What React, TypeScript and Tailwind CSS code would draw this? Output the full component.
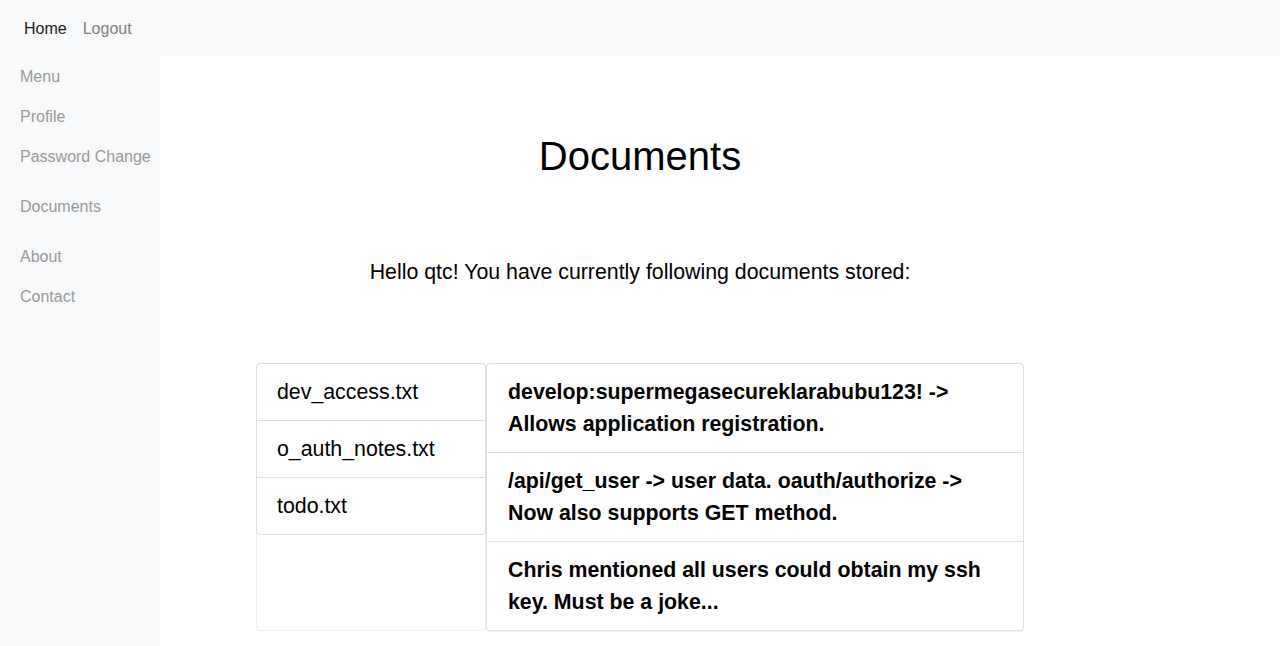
import React from 'react';

const sideLinks = [
  { label: 'Menu', gap: false },
  { label: 'Profile', gap: false },
  { label: 'Password Change', gap: false },
  { label: 'Documents', gap: true },
  { label: 'About', gap: true },
  { label: 'Contact', gap: false },
];

const files = ['dev_access.txt', 'o_auth_notes.txt', 'todo.txt'];

const notes = [
  'develop:supermegasecureklarabubu123! -> Allows application registration.',
  '/api/get_user -> user data. oauth/authorize -> Now also supports GET method.',
  'Chris mentioned all users could obtain my ssh key. Must be a joke...',
];

const App: React.FC = () => {
  return (
    <div className="min-h-[646px] bg-white text-black font-['Liberation_Sans',Arial,sans-serif]">
      <nav className="h-[56px] bg-[#f8f9fa] flex items-center px-4 pt-[2px] text-base">
        <a className="px-2 text-[#1a1a1a]">Home</a>
        <a className="px-2 text-[#7f7f7f]">Logout</a>
      </nav>

      <div className="flex">
        <aside className="w-[160px] min-h-[590px] pt-px bg-[#f8f9fa] flex flex-col shrink-0">
          {sideLinks.map((l) => (
            <a
              key={l.label}
              className={`px-5 py-2 leading-6 text-base text-[#999999] whitespace-nowrap ${l.gap ? 'mt-[10px]' : ''}`}
            >
              {l.label}
            </a>
          ))}
        </aside>

        <main className="flex-1 pr-[160px] flex flex-col items-center">
          <h1 className="mt-[76px] text-[40px] leading-[48px] font-normal">Documents</h1>
          <p className="mt-[76px] text-[21.33px] leading-[32px]">
            Hello qtc! You have currently following documents stored:
          </p>

          <div className="mt-[75px] flex">
            <div className="w-[230px] h-[268px] bg-white border border-[#f0f0f0] rounded-[4px]">
              <ul className="border border-[#dfdfdf] rounded-[4px] -m-px">
                {files.map((f, i) => (
                  <li
                    key={f}
                    className={`px-5 py-3 text-[21.33px] leading-[32px] ${i > 0 ? 'border-t border-[#dfdfdf]' : ''}`}
                  >
                    {f}
                  </li>
                ))}
              </ul>
            </div>

            <div className="w-[538px] border border-[#dfdfdf] rounded-[4px] shadow-[0_1px_2px_rgba(0,0,0,0.06)] bg-white">
              {notes.map((n, i) => (
                <div
                  key={i}
                  className={`pl-[21px] pr-10 py-3 text-[21.33px] leading-[32px] font-bold ${i > 0 ? 'border-t border-[#dfdfdf]' : ''}`}
                >
                  {n}
                </div>
              ))}
            </div>
          </div>
        </main>
      </div>
    </div>
  );
};

export default App;
